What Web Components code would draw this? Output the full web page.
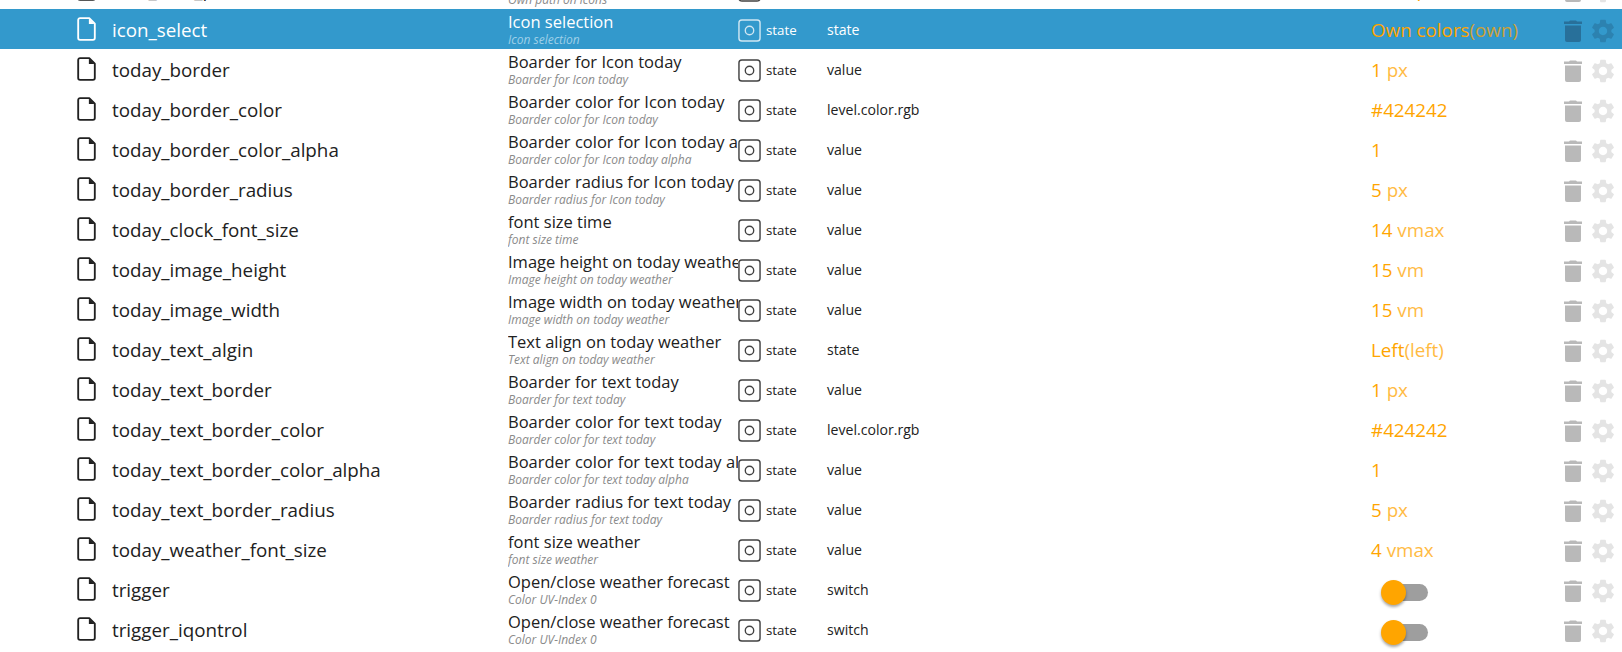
<!DOCTYPE html>
<html>
<head>
<meta charset="utf-8">
<style>
	html,body{
		margin:0;
		height:652px;
		overflow:hidden;
		background:#fff;
		font-family:"Open Sans","Noto Sans",sans-serif;
	}
	object-list{
		margin-top:-31px;
	}
</style>
</head>
<body>
<object-list id="list"></object-list>
<script>
const fileIcon = `<svg viewBox="0 0 20 26" width="19" height="24"><path d="M3 1.2H13L19 7.2V22.8A2 2 0 0 1 17 24.8H3A2 2 0 0 1 1 22.8V3.2A2 2 0 0 1 3 1.2Z" fill="none" stroke="currentColor" stroke-width="2" stroke-linejoin="round"/><path d="M12.6 1.5V7.6H18.6Z" fill="currentColor"/></svg>`;
const stateIcon = `<svg viewBox="0 0 24 24" width="23" height="23"><rect x="1" y="1" width="22" height="22" rx="3" fill="none" stroke="currentColor" stroke-width="1.5"/><circle cx="12" cy="12" r="4.4" fill="none" stroke="currentColor" stroke-width="1.4"/></svg>`;
const trashIcon = `<svg viewBox="0 0 20 24" width="20" height="24"><path d="M7 1.4H13L14 2.6H19V5H1V2.6H6Z M2 6.4H18V21A2 2 0 0 1 16 23H4A2 2 0 0 1 2 21Z" fill="currentColor"/></svg>`;
const gearIcon = `<svg viewBox="0 0 24 24" width="28" height="28"><path d="M19.14 12.94c.04-.3.06-.61.06-.94s-.02-.64-.07-.94l2.03-1.58a.49.49 0 0 0 .12-.61l-1.92-3.32a.488.488 0 0 0-.59-.22l-2.39.96c-.5-.38-1.03-.7-1.62-.94l-.36-2.54a.484.484 0 0 0-.48-.41h-3.84c-.24 0-.43.17-.47.41l-.36 2.54c-.59.24-1.13.57-1.62.94l-2.39-.96c-.22-.08-.47 0-.59.22L2.74 8.87c-.12.21-.08.47.12.61l2.03 1.58c-.05.3-.09.63-.09.94s.02.64.07.94l-2.03 1.58a.49.49 0 0 0-.12.61l1.92 3.32c.12.22.37.29.59.22l2.39-.96c.5.38 1.03.7 1.62.94l.36 2.54c.05.24.24.41.48.41h3.84c.24 0 .44-.17.47-.41l.36-2.54c.59-.24 1.13-.56 1.62-.94l2.39.96c.22.08.47 0 .59-.22l1.92-3.32c.12-.22.07-.47-.12-.61l-2.01-1.58zM12 15.6c-1.98 0-3.6-1.62-3.6-3.6s1.62-3.6 3.6-3.6 3.6 1.62 3.6 3.6-1.62 3.6-3.6 3.6z" fill="currentColor"/></svg>`;

const rowTemplate = document.createElement("template");
rowTemplate.innerHTML = `
	<style>
		:host{
			display:grid;
			grid-template-columns:77px 35px 396px 230px 89px 544px 192px 1fr;
			height:40px;
			align-items:center;
			color:#212121;
			background:#fff;
			overflow:hidden;
		}
		:host([selected]){
			background:#3399cc;
			color:#fff;
		}
		.file{
			grid-column:2;
			display:flex;
			color:#212121;
		}
		:host([selected]) .file{
			color:#fff;
		}
		.name{
			font-size:18.8px;
			white-space:nowrap;
			padding-top:1px;
		}
		.title-cell{
			height:40px;
			overflow:hidden;
			white-space:nowrap;
			display:flex;
			flex-direction:column;
		}
		.title{
			font-size:16.5px;
			line-height:23px;
			height:23px;
			overflow:hidden;
			padding-top:1px;
		}
		.desc{
			font-size:12px;
			line-height:14px;
			font-style:italic;
			color:#8a8a8a;
		}
		:host([selected]) .desc{
			color:#9fd0e8;
		}
		.type{
			display:flex;
			align-items:center;
			gap:5px;
			font-size:13.3px;
			color:#212121;
		}
		.type span{
			padding-top:1px;
		}
		:host([selected]) .type{
			color:#fff;
		}
		.type svg{
			color:#424242;
			display:block;
			margin-top:2px;
		}
		:host([selected]) .type svg{
			color:#cfe6f2;
		}
		.role{
			font-size:14.1px;
			padding-top:1px;
		}
		.value{
			font-size:18.8px;
			color:#ffa500;
			white-space:nowrap;
			padding-top:1px;
		}
		.actions{
			display:flex;
			align-items:center;
			gap:6px;
			padding-top:3px;
		}
		.trash{
			display:flex;
			color:#b9b9b9;
		}
		.gear{
			display:flex;
			color:#e4e4e4;
		}
		:host([selected]) .trash{
			color:#28709a;
		}
		:host([selected]) .gear{
			color:#2c82b0;
		}
		::slotted(span){
			opacity:.75;
		}
	</style>
	<span class="file">${fileIcon}</span>
	<span class="name"></span>
	<div class="title-cell"><div class="title"></div><div class="desc"></div></div>
	<div class="type">${stateIcon}<span>state</span></div>
	<span class="role"></span>
	<div class="value"><slot></slot></div>
	<div class="actions"><span class="trash">${trashIcon}</span><span class="gear">${gearIcon}</span></div>
`;
class ObjectRow extends HTMLElement{
	constructor(){
		super();
		this._shadowRoot = this.attachShadow({mode:"open"});
		this._shadowRoot.appendChild(rowTemplate.content.cloneNode(true));
	}
	connectedCallback(){
		this._shadowRoot.querySelector(".name").textContent = this.getAttribute("name");
		this._shadowRoot.querySelector(".title").textContent = this.getAttribute("label");
		this._shadowRoot.querySelector(".desc").textContent = this.getAttribute("desc");
		this._shadowRoot.querySelector(".role").textContent = this.getAttribute("role-name");
	}
}
customElements.define("object-row",ObjectRow);

const switchTemplate = document.createElement("template");
switchTemplate.innerHTML = `
	<style>
		:host{
			display:block;
			position:relative;
			width:48px;
			height:26px;
			margin-left:10px;
		}
		.track{
			position:absolute;
			left:10px;
			top:7px;
			width:37px;
			height:17px;
			border-radius:9px;
			background:#9e9e9e;
		}
		.thumb{
			position:absolute;
			left:0;
			top:3px;
			width:25px;
			height:25px;
			border-radius:50%;
			background:#ffa500;
			box-shadow:0 2px 3px rgba(0,0,0,.35);
		}
	</style>
	<div class="track"></div><div class="thumb"></div>
`;
class ToggleSwitch extends HTMLElement{
	constructor(){
		super();
		this.attachShadow({mode:"open"}).appendChild(switchTemplate.content.cloneNode(true));
	}
}
customElements.define("toggle-switch",ToggleSwitch);

const listTemplate = document.createElement("template");
listTemplate.innerHTML = `
	<style>
		:host{
			display:block;
		}
	</style>
	<slot></slot>
`;
class ObjectList extends HTMLElement{
	constructor(){
		super();
		this.attachShadow({mode:"open"}).appendChild(listTemplate.content.cloneNode(true));
	}
}
customElements.define("object-list",ObjectList);

const rows = [
	["icon_own_path","Own path on icons","Own path on icons","state","Own path"],
	["icon_select","Icon selection","Icon selection","state","Own colors<span>(own)</span>"],
	["today_border","Boarder for Icon today","Boarder for Icon today","value","1 <span>px</span>"],
	["today_border_color","Boarder color for Icon today","Boarder color for Icon today","level.color.rgb","#424242"],
	["today_border_color_alpha","Boarder color for Icon today alpha","Boarder color for Icon today alpha","value","1"],
	["today_border_radius","Boarder radius for Icon today","Boarder radius for Icon today","value","5 <span>px</span>"],
	["today_clock_font_size","font size time","font size time","value","14 <span>vmax</span>"],
	["today_image_height","Image height on today weather","Image height on today weather","value","15 <span>vm</span>"],
	["today_image_width","Image width on today weather","Image width on today weather","value","15 <span>vm</span>"],
	["today_text_algin","Text align on today weather","Text align on today weather","state","Left<span>(left)</span>"],
	["today_text_border","Boarder for text today","Boarder for text today","value","1 <span>px</span>"],
	["today_text_border_color","Boarder color for text today","Boarder color for text today","level.color.rgb","#424242"],
	["today_text_border_color_alpha","Boarder color for text today alpha","Boarder color for text today alpha","value","1"],
	["today_text_border_radius","Boarder radius for text today","Boarder radius for text today","value","5 <span>px</span>"],
	["today_weather_font_size","font size weather","font size weather","value","4 <span>vmax</span>"],
	["trigger","Open/close weather forecast","Color UV-Index 0","switch",null],
	["trigger_iqontrol","Open/close weather forecast","Color UV-Index 0","switch",null]
];
const list = document.getElementById("list");
for(let i=0;i<rows.length;i++){
	const row = document.createElement("object-row");
	row.setAttribute("name",rows[i][0]);
	row.setAttribute("label",rows[i][1]);
	row.setAttribute("desc",rows[i][2]);
	row.setAttribute("role-name",rows[i][3]);
	if(i===1){
		row.setAttribute("selected","");
	}
	if(rows[i][4]===null){
		row.append(document.createElement("toggle-switch"));
	}else{
		row.innerHTML = rows[i][4];
	}
	list.append(row);
}
</script>
</body>
</html>
